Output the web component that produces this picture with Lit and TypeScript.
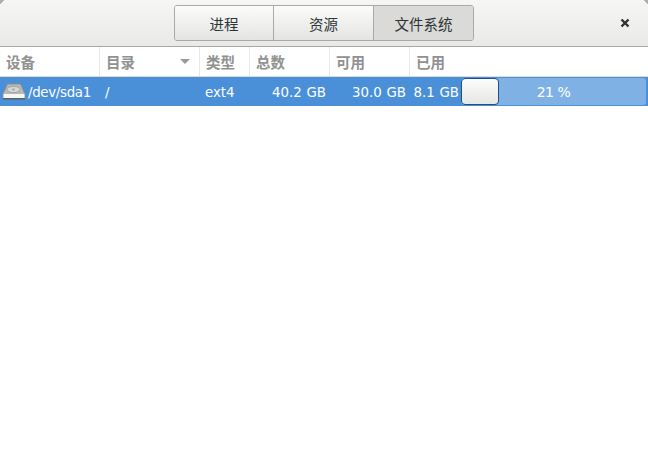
import { LitElement, html, css } from "lit";
import { customElement } from "lit/decorators.js";

const FONT = css`"DejaVu Sans", "Noto Sans CJK SC", sans-serif`;

@customElement("app-root")
export class AppRoot extends LitElement {
  static styles = css`
    :host { display: block; width: 648px; height: 465px; background: #fff; font-family: ${FONT}; font-size: 13px; overflow: hidden; position: relative; }
    .bar { height: 47px; box-sizing: border-box; padding-top: 5px; background: linear-gradient(#f6f6f5, #e9e9e7); border-bottom: 1px solid #a8a8a5; display: flex; justify-content: center; position: relative; }
    .bar::before, .bar::after { content: ""; position: absolute; top: 0; width: 4px; height: 4px; }
    .bar::before { left: 0; background: linear-gradient(135deg, #b0b0ae 50%, transparent 50%); }
    .bar::after { right: 0; background: linear-gradient(225deg, #b0b0ae 50%, transparent 50%); }
    .seg { display: flex; height: 36px; box-sizing: border-box; border: 1px solid #a9a9a6; border-radius: 3px; width: 300px; overflow: hidden; }
    .seg div { display: flex; align-items: center; justify-content: center; color: #2e3436; font-size: 14.5px; background: linear-gradient(#fbfbfa, #e4e4e2); box-sizing: border-box; }
    .seg div + div { border-left: 1px solid #a9a9a6; }
    .seg .a { width: 98px; }
    .seg .b { width: 100px; }
    .seg .c { flex: 1; background: #dadad8; }
    .close { position: absolute; right: 17px; top: 17px; width: 12px; height: 12px; display: block; }
    .head, .row { display: grid; grid-template-columns: 100px 100px 50px 80px 80px 1fr; }
    .head { height: 30px; box-sizing: border-box; border-bottom: 1px solid #dcdcda; background: #fff; }
    .head div { display: flex; align-items: center; justify-content: space-between; padding: 0 6px; color: #919190; font-weight: bold; font-size: 14.5px; border-right: 1px solid #e8e8e6; height: 29px; box-sizing: border-box; }
    .head div:last-child { border-right: 0; }
    .arrow { width: 0; height: 0; border: 5px solid transparent; border-top: 5px solid #999; border-bottom: 0; margin-right: 3px; }
    .row { height: 29px; background: #4a90d9; color: #fff; font-size: 13.33px; align-items: center; word-spacing: 0.5px; }
    .dev { display: flex; align-items: center; padding-left: 2px; gap: 2px; }
    .dev svg { width: 24px; height: 18px; flex: none; }
    .dev span { letter-spacing: -0.3px; padding-top: 2px; }
    .dir, .type, .num { padding-top: 2px; }
    .dir { padding-left: 5px; }
    .type { padding-left: 5px; }
    .num { text-align: right; padding-right: 4px; }
    .used { display: flex; align-items: center; height: 29px; }
    .used .num { width: 49px; box-sizing: border-box; flex: none; padding-right: 0; white-space: nowrap; }
    .track { width: 185px; height: 27px; margin-left: 2px; background: #80b1e4; border-radius: 3px; position: relative; display: flex; align-items: center; justify-content: center; }
    .thumb { position: absolute; left: 0; top: 0; width: 38px; height: 27px; box-sizing: border-box; border: 1px solid #1f4f85; border-radius: 4px; background: linear-gradient(#fcfcfc, #e6e6e4); }
    .pct { font-size: 14px; letter-spacing: -0.5px; word-spacing: 0; }
  `;

  render() {
    return html`
      <div class="bar">
        <div class="seg">
          <div class="a">进程</div>
          <div class="b">资源</div>
          <div class="c">文件系统</div>
        </div>
        <svg class="close" viewBox="0 0 12 12"><path d="M2.5 2.5 9.5 9.5M9.5 2.5 2.5 9.5" stroke="#2e3436" stroke-width="2.4" fill="none"/></svg>
      </div>
      <div class="head">
        <div>设备</div>
        <div>目录<span class="arrow"></span></div>
        <div>类型</div>
        <div>总数</div>
        <div>可用</div>
        <div>已用</div>
      </div>
      <div class="row">
        <div class="dev">
          <svg viewBox="0 0 24 18">
            <path d="M5.5 1h13l4.500 10v4.500H1V11z" fill="#b8bab7" stroke="#8a8c8a" stroke-width=".8"/>
            <ellipse cx="11.5" cy="6.500" rx="6.500" ry="3.200" fill="#d4d6d3" stroke="#9a9c99" stroke-width=".8"/>
            <circle cx="11.5" cy="6.500" r="1.200" fill="#a9aba8"/>
            <rect x="1.500" y="11" width="21" height="4" fill="#f6f6f4"/>
            <rect x="1" y="15" width="22" height="1.500" fill="#5e605d"/>
          </svg>
          <span>/dev/sda1</span>
        </div>
        <div class="dir">/</div>
        <div class="type">ext4</div>
        <div class="num">40.2 GB</div>
        <div class="num">30.0 GB</div>
        <div class="used">
          <div class="num">8.1 GB</div>
          <div class="track"><div class="thumb"></div><span class="pct">21 %</span></div>
        </div>
      </div>
    `;
  }
}
